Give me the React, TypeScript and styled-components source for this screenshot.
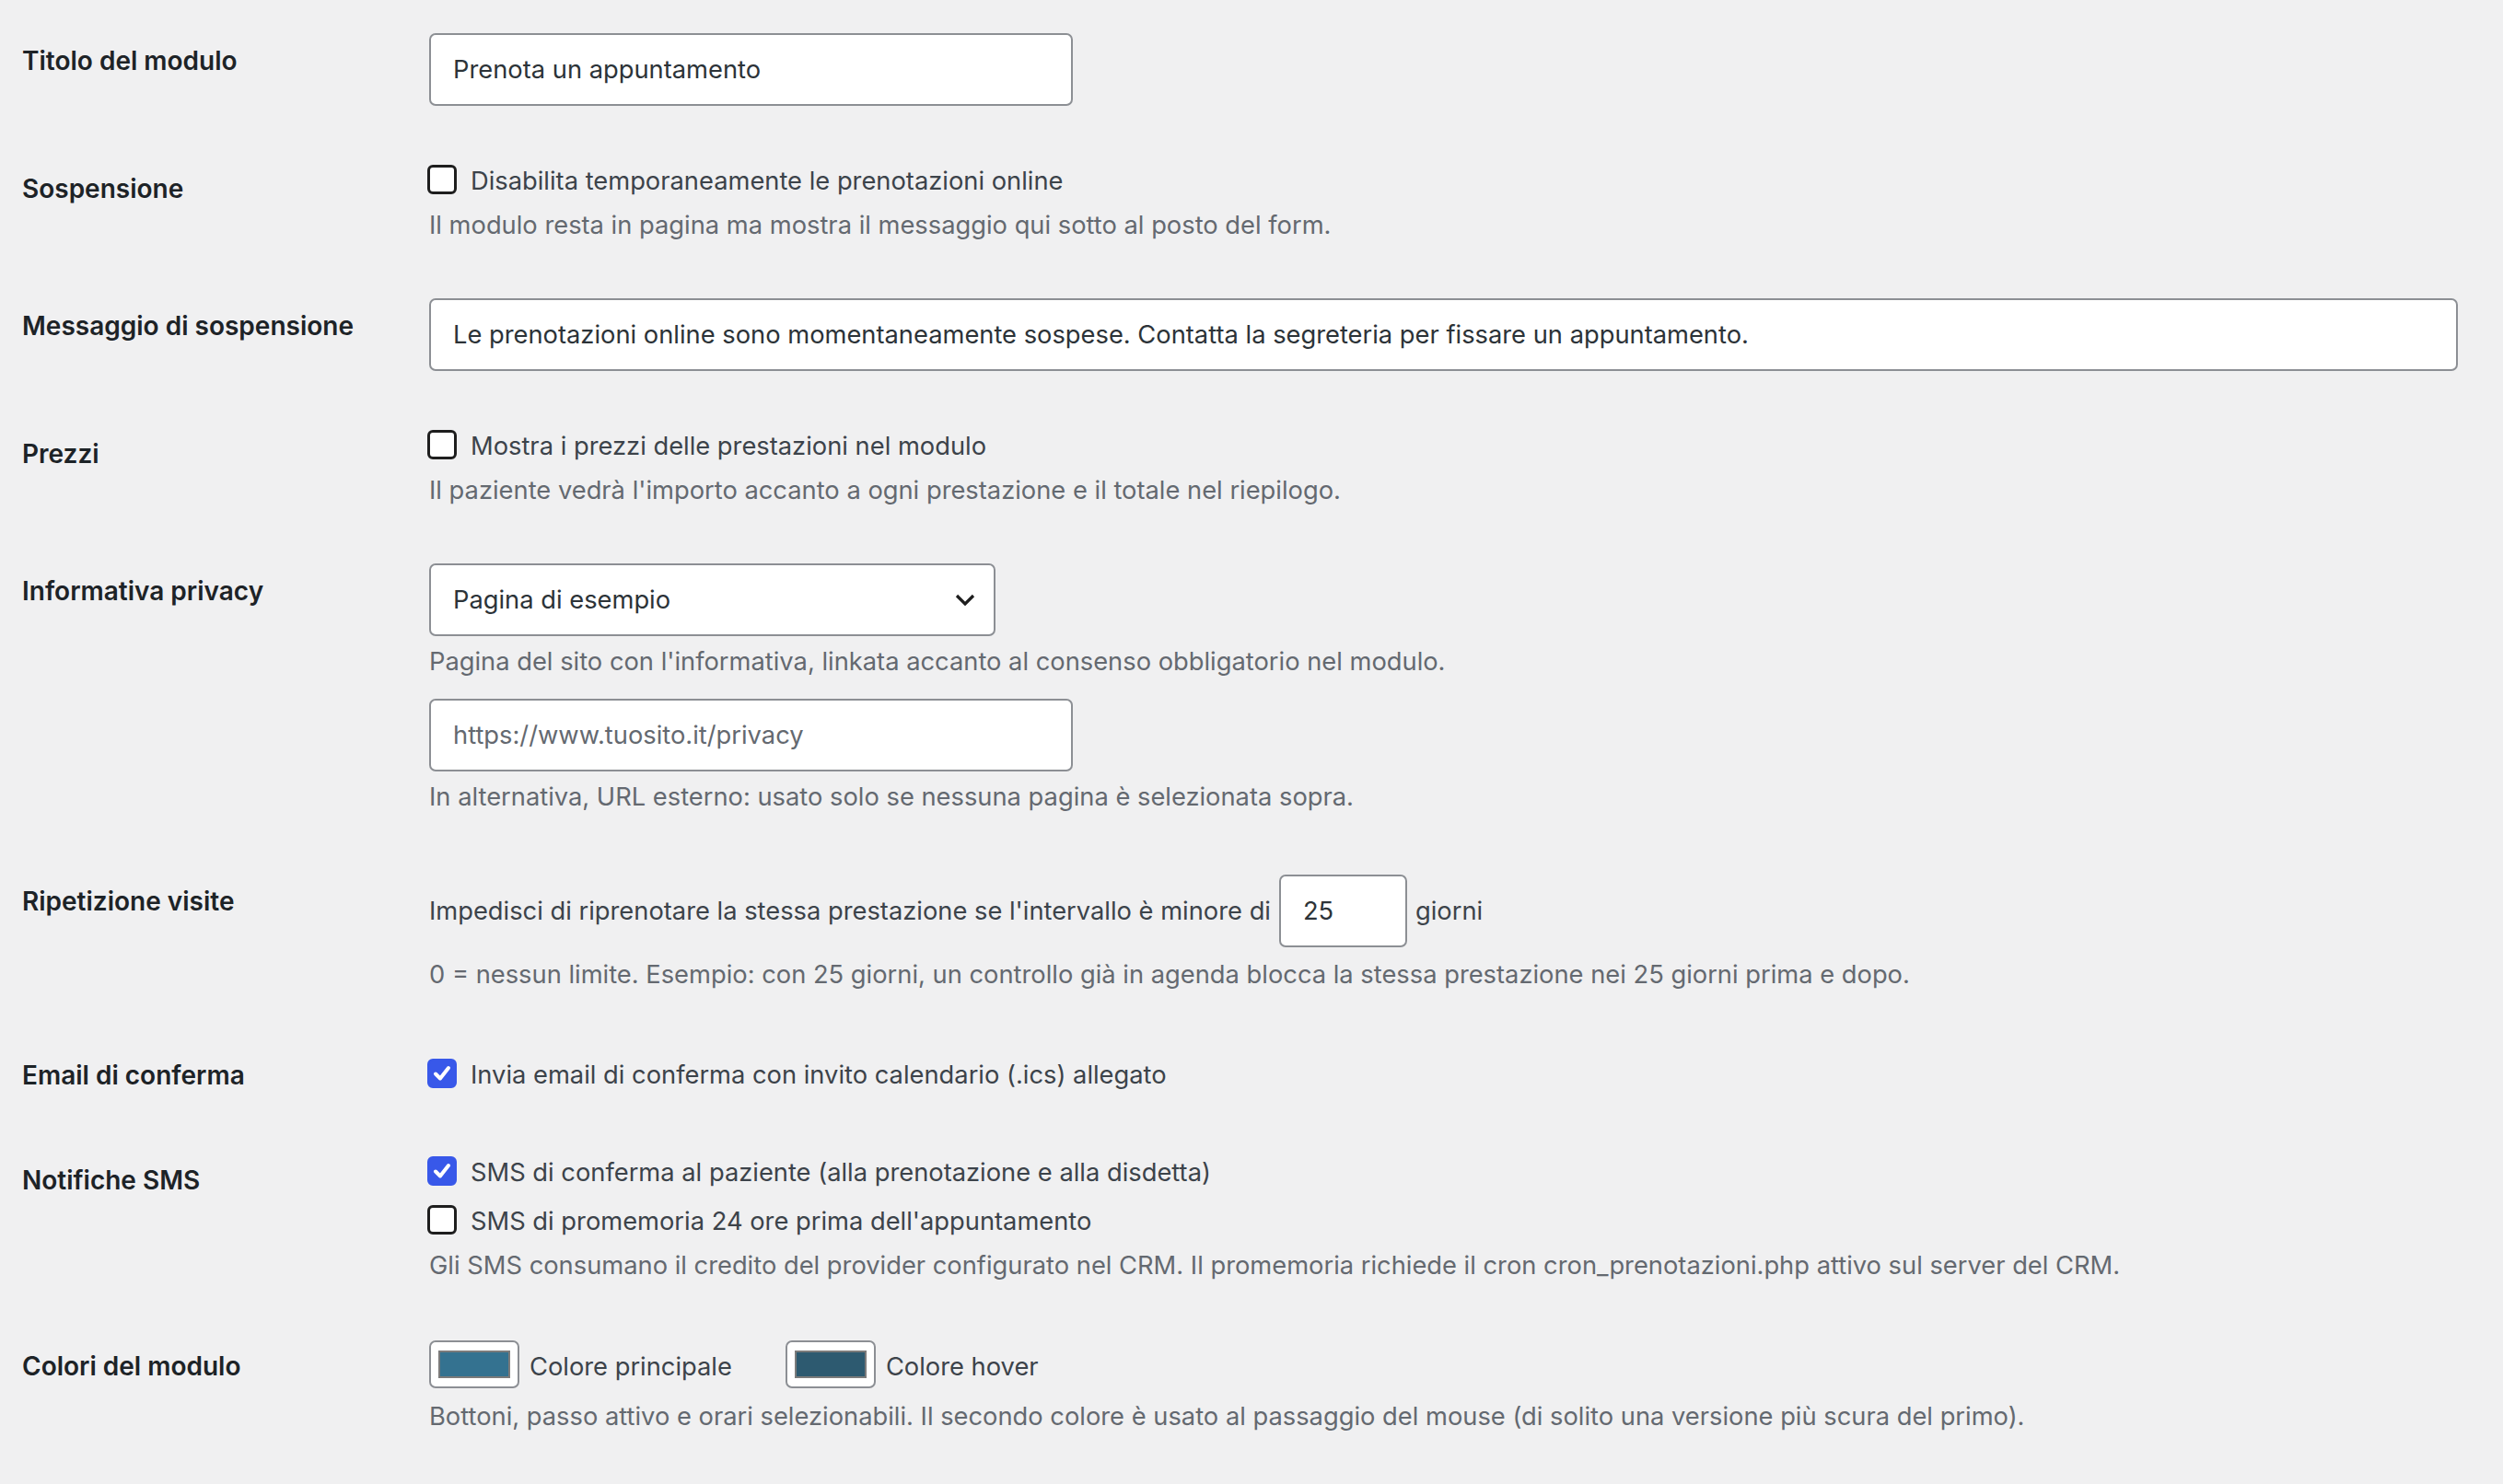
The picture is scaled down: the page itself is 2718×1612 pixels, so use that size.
import styled, { createGlobalStyle } from "styled-components";

const GlobalStyle = createGlobalStyle`
  html, body {
    margin: 0;
    min-height: 100%;
    background: #f0f0f1;
  }
  body {
    font-family: Inter, "Noto Sans", "Liberation Sans", sans-serif;
    color: #3c434a;
  }
`;

const Form = styled.div`
  padding: 6px 49px 0 24px;
`;

const Row = styled.div`
  display: grid;
  grid-template-columns: 442px 1fr;
  align-items: start;
`;

const Label = styled.div`
  padding-top: 42px;
  font-size: 28px;
  line-height: 36px;
  font-weight: 600;
  color: #1d2327;
`;

const Field = styled.div<{ $pb?: number }>`
  padding: 30px 0 ${(p) => p.$pb ?? 30}px;
  min-width: 0;
`;

const TextInput = styled.input<{ $width?: string; $mt?: number }>`
  display: block;
  box-sizing: border-box;
  width: ${(p) => p.$width ?? "699px"};
  height: 79px;
  margin: ${(p) => p.$mt ?? 0}px 0 0;
  padding: 0 24px;
  border: 2px solid #8c8f94;
  border-radius: 7px;
  background: #fff;
  font-family: inherit;
  font-size: 27.3px;
  color: #2c3338;
  outline: none;

  &::placeholder {
    color: #646970;
  }
`;

const NumberInput = styled(TextInput)`
  display: inline-block;
  flex: none;
`;

const SelectBox = styled.div`
  box-sizing: border-box;
  width: 615px;
  height: 79px;
  display: flex;
  align-items: center;
  justify-content: space-between;
  padding: 0 20px 0 24px;
  border: 2px solid #8c8f94;
  border-radius: 7px;
  background: #fff;
  font-size: 27.3px;
  color: #2c3338;
`;

const Description = styled.p`
  margin: 8px 0 0;
  font-size: 27.3px;
  line-height: 39px;
  color: #646970;
`;

const CheckLine = styled.label<{ $mt?: number }>`
  display: flex;
  align-items: center;
  gap: 15px;
  height: 42px;
  margin-top: ${(p) => p.$mt ?? 0}px;
  font-size: 27.3px;
  color: #3c434a;
`;

const Box = styled.span<{ $checked?: boolean }>`
  box-sizing: border-box;
  flex: none;
  width: 32px;
  height: 32px;
  margin-left: -2px;
  margin-top: -3px;
  display: flex;
  align-items: center;
  justify-content: center;
  border-radius: 6px;
  border: 3px solid ${(p) => (p.$checked ? "#3858e9" : "#1e1e1e")};
  background: ${(p) => (p.$checked ? "#3858e9" : "#fff")};
`;

const InlineLine = styled.div`
  display: flex;
  align-items: center;
  gap: 9px;
  padding: 1px 0 2px;
  font-size: 27.3px;
  color: #3c434a;
`;

const ColorLine = styled.div`
  display: flex;
  align-items: center;
  gap: 58px;
  padding: 2px 0 3px;
`;

const ColorItem = styled.div`
  display: flex;
  align-items: center;
  gap: 11px;
  padding-top: 4px;
  font-size: 27.3px;
  color: #3c434a;
`;

const ColorButton = styled.span`
  box-sizing: border-box;
  width: 98px;
  height: 52px;
  margin-top: -4px;
  padding: 9px 8px;
  border: 2px solid #8c8f94;
  border-radius: 7px;
  background: #fff;
  display: flex;
`;

const Swatch = styled.span<{ $color: string }>`
  flex: 1;
  border: 2px solid #7b7b7b;
  background: ${(p) => p.$color};
`;

const Stack = styled.div`
  display: flex;
  flex-direction: column;
  gap: 11px;
`;

const CheckMark = () => (
  <svg width="20" height="18" viewBox="0 0 20 18">
    <path
      d="M3 9.5 L8 14.5 L17 3"
      fill="none"
      stroke="#fff"
      strokeWidth="4"
      strokeLinecap="round"
      strokeLinejoin="round"
    />
  </svg>
);

const Chevron = () => (
  <svg width="22" height="13" viewBox="0 0 22 13">
    <path
      d="M2 2 L11 11 L20 2"
      fill="none"
      stroke="#1e1e1e"
      strokeWidth="3.2"
    />
  </svg>
);

const Checkbox = ({
  checked,
  children,
  mt,
}: {
  checked?: boolean;
  children: React.ReactNode;
  mt?: number;
}) => (
  <CheckLine $mt={mt}>
    <Box $checked={checked}>{checked && <CheckMark />}</Box>
    {children}
  </CheckLine>
);

export default function App() {
  return (
    <>
      <GlobalStyle />
      <Form>
        <Row>
          <Label>Titolo del modulo</Label>
          <Field>
            <TextInput readOnly value="Prenota un appuntamento" />
          </Field>
        </Row>

        <Row>
          <Label>Sospensione</Label>
          <Field>
            <Checkbox>Disabilita temporaneamente le prenotazioni online</Checkbox>
            <Description>
              Il modulo resta in pagina ma mostra il messaggio qui sotto al posto del form.
            </Description>
          </Field>
        </Row>

        <Row>
          <Label>Messaggio di sospensione</Label>
          <Field>
            <TextInput
              $width="100%"
              readOnly
              value="Le prenotazioni online sono momentaneamente sospese. Contatta la segreteria per fissare un appuntamento."
            />
          </Field>
        </Row>

        <Row>
          <Label>Prezzi</Label>
          <Field>
            <Checkbox>Mostra i prezzi delle prestazioni nel modulo</Checkbox>
            <Description>
              Il paziente vedrà l'importo accanto a ogni prestazione e il totale nel riepilogo.
            </Description>
          </Field>
        </Row>

        <Row>
          <Label>Informativa privacy</Label>
          <Field $pb={34}>
            <SelectBox>
              <span>Pagina di esempio</span>
              <Chevron />
            </SelectBox>
            <Description>
              Pagina del sito con l'informativa, linkata accanto al consenso obbligatorio nel modulo.
            </Description>
            <TextInput $mt={21} readOnly placeholder="https://www.tuosito.it/privacy" />
            <Description>
              In alternativa, URL esterno: usato solo se nessuna pagina è selezionata sopra.
            </Description>
          </Field>
        </Row>

        <Row>
          <Label>Ripetizione visite</Label>
          <Field>
            <InlineLine>
              <span>Impedisci di riprenotare la stessa prestazione se l'intervallo è minore di</span>
              <NumberInput $width="139px" readOnly value="25" />
              <span>giorni</span>
            </InlineLine>
            <Description>
              0 = nessun limite. Esempio: con 25 giorni, un controllo già in agenda blocca la stessa
              prestazione nei 25 giorni prima e dopo.
            </Description>
          </Field>
        </Row>

        <Row>
          <Label>Email di conferma</Label>
          <Field $pb={34}>
            <Checkbox checked mt={8}>
              Invia email di conferma con invito calendario (.ics) allegato
            </Checkbox>
          </Field>
        </Row>

        <Row>
          <Label>Notifiche SMS</Label>
          <Field>
            <Stack>
              <Checkbox checked>
                SMS di conferma al paziente (alla prenotazione e alla disdetta)
              </Checkbox>
              <Checkbox>SMS di promemoria 24 ore prima dell'appuntamento</Checkbox>
            </Stack>
            <Description>
              Gli SMS consumano il credito del provider configurato nel CRM. Il promemoria richiede il
              cron cron_prenotazioni.php attivo sul server del CRM.
            </Description>
          </Field>
        </Row>

        <Row>
          <Label>Colori del modulo</Label>
          <Field>
            <ColorLine>
              <ColorItem>
                <ColorButton>
                  <Swatch $color="#347290" />
                </ColorButton>
                Colore principale
              </ColorItem>
              <ColorItem>
                <ColorButton>
                  <Swatch $color="#2d5a70" />
                </ColorButton>
                Colore hover
              </ColorItem>
            </ColorLine>
            <Description>
              Bottoni, passo attivo e orari selezionabili. Il secondo colore è usato al passaggio del
              mouse (di solito una versione più scura del primo).
            </Description>
          </Field>
        </Row>
      </Form>
    </>
  );
}
